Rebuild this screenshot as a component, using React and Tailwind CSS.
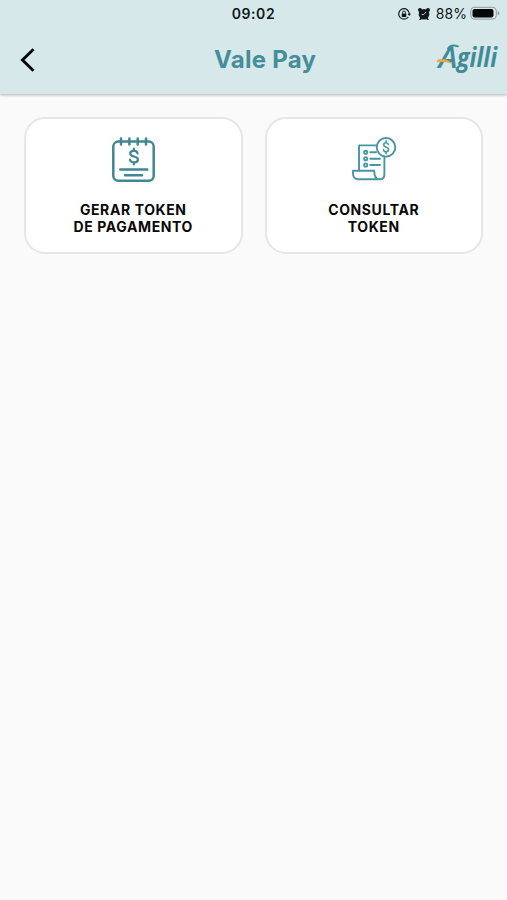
import { useState } from "react";

const ACTIONS = [
  { id: "generate", lines: ["GERAR TOKEN", "DE PAGAMENTO"], Icon: PaymentIcon },
  { id: "consult", lines: ["CONSULTAR", "TOKEN"], Icon: ReceiptIcon },
];

function PaymentIcon() {
  return (
    <svg
      viewBox="-0.7 0 48 48"
      className="h-12 w-12 text-[#3f8792]"
      fill="none"
      stroke="currentColor"
      strokeWidth="2.5"
      strokeLinecap="round"
      strokeLinejoin="round"
    >
      <rect x="3.6" y="5.6" width="40.4" height="39.2" rx="5" />
      <path d="M11.3 2.6v5.8M19.7 2.6v5.8M28 2.6v5.8M36.3 2.6v5.8" />
      <path
        d="M27.900 17.500c-.2-1.800-1.400-2.700-3.200-2.700h-1c-2 0-3.200 1-3.200 2.700 0 4.200 7.700 1.900 7.700 5.900 0 1.800-1.300 2.900-3.400 2.900h-1c-2.100 0-3.300-1-3.500-2.800M24.200 12.700v2M24.200 26.400v2"
        strokeWidth="2.200"
      />
      <path d="M10.600 33.400h27M15.300 39.200h17" />
    </svg>
  );
}

function ReceiptIcon() {
  return (
    <svg
      viewBox="0 0 48 48"
      className="h-12 w-12 text-[#4796a4]"
      fill="none"
      stroke="currentColor"
      strokeWidth="1.9"
      strokeLinecap="round"
      strokeLinejoin="round"
    >
      <path d="M27 9.400H9v25.200" />
      <path d="M34.400 21v17.200c0 3.200-1.800 5.100-4.800 5.100H8.200C4.800 43.300 3 40.800 3 37.600v-2.900h21.200c0 5 1.100 8.600 5.200 8.600" />
      <circle cx="36" cy="11.300" r="9.300" />
      <path d="M38.400 8.600c-.2-1.200-1-1.900-2.300-1.900s-2.400.8-2.400 2.100c0 3.200 4.900 1.700 4.900 4.800 0 1.400-1.100 2.200-2.500 2.200s-2.400-.8-2.600-2.200M36.100 4.900v1.800M36.100 15.900v1.800" strokeWidth="1.600" />
      <circle cx="15.700" cy="16.300" r="1.600" />
      <circle cx="15.700" cy="22.700" r="1.600" />
      <circle cx="15.700" cy="29" r="1.600" />
      <path d="M20.300 16.300h5.700M20.300 22.700h9.700M20.300 29h9.700" />
    </svg>
  );
}

function AgilliLogo() {
  return (
    <svg viewBox="0 0 68 40" className="h-10 w-[68px] overflow-visible" aria-label="Agilli">
      <g fill="#3f8b98" fontFamily="'Open Sans', sans-serif" fontWeight="700" fontStyle="italic">
        <text x="6.500" y="28.300" fontSize="29" fontWeight="600" textLength="19" lengthAdjust="spacingAndGlyphs">
          A
        </text>
        <text x="25" y="27.300" fontSize="26.500" textLength="40" lengthAdjust="spacingAndGlyphs">
          gilli
        </text>
      </g>
      <path d="M16 8.500C18 5.500 21.500 4.800 26 6.300" fill="none" stroke="#3f8b98" strokeWidth="1.900" strokeLinecap="round" />
      <path d="M5.300 20.400c4.500-1.900 9.500-1.200 13.700 2.700-4.800-1.700-8.700-2.200-13.700-1.200z" fill="#eda93f" stroke="#eda93f" />
    </svg>
  );
}

function StatusBar() {
  return (
    <div className="grid h-7 grid-cols-[1fr_auto_1fr] items-center pr-[7px] pb-px">
      <span />
      <time className="pl-[7px] text-[14px] font-semibold leading-5 tracking-[0.55px] text-[#10191b]">09:02</time>
      <div className="flex items-center justify-end text-[#101719]">
        {/* Bloqueo de orientación */}
        <svg viewBox="0 0 14 14" className="mr-1.5 h-3.5 w-3.5" fill="none" stroke="currentColor" strokeWidth="1.2">
          <path d="M11.300 10A5.300 5.300 0 1 1 12.300 7" />
          <path d="M10.500 6.700h3.500l-1.700 2.200z" fill="currentColor" stroke="none" />
          <rect x="4.700" y="6.500" width="4.600" height="3.400" rx=".5" fill="currentColor" stroke="none" />
          <path d="M5.500 6.700V5.600a1.500 1.500 0 0 1 3 0v1.100" strokeWidth="1" />
        </svg>
        {/* Alarma */}
        <svg viewBox="0 0 14 14" className="mr-[5px] h-3.5 w-3.5" fill="currentColor">
          <circle cx="7" cy="7.300" r="5.300" />
          <circle cx="3" cy="3" r="2" />
          <circle cx="11" cy="3" r="2" />
          <path d="M2 13l2-3h6l2 3h-1.500L9 12H5l-1.500 1z" />
          <path d="M7 7.500l2.200-2.700M7 7.500H4.600" fill="none" stroke="#d7e8ea" strokeWidth=".8" />
        </svg>
        <span className="mr-[3px] text-[14px] leading-5 tracking-[0.1px]">88%</span>
        <svg viewBox="0 0 30 15" className="h-[15px] w-[30px]">
          <rect x=".8" y="1.300" width="25.500" height="11.800" rx="3.500" fill="none" stroke="#909c9e" />
          <rect x="2.500" y="3" width="21" height="8.400" rx="2" fill="#050708" />
          <path d="M27.700 5v4.400q1.700-.6 1.700-2.200t-1.700-2.200z" fill="#909c9e" />
        </svg>
      </div>
    </div>
  );
}

export default function App() {
  const [, setSelected] = useState(null);

  return (
    <div className="min-h-screen bg-[#fafafa] font-['Inter',sans-serif]">
      <header className="h-[94px] bg-[#d7e8ea] shadow-[0_1px_3px_rgba(0,0,0,0.3)]">
        <StatusBar />
        <div className="flex h-16 items-center pr-[7px]">
          <button type="button" className="w-[214px] pl-5" aria-label="Voltar">
            <svg viewBox="0 0 16 24" className="h-6 w-4" fill="none" stroke="#050708" strokeWidth="2.900">
              <path d="M13.500 1.300L2.500 12l11 10.700" />
            </svg>
          </button>
          <h1 className="text-[24px] font-bold leading-8 tracking-[0.25px] text-[#458e99]">Vale Pay</h1>
          <div className="ml-auto">
            <AgilliLogo />
          </div>
        </div>
      </header>

      <main className="grid grid-cols-2 gap-[22px] px-6 pt-[23px]">
        {ACTIONS.map(({ id, lines, Icon }) => (
          <button
            key={id}
            type="button"
            onClick={() => setSelected(id)}
            className="flex h-[137px] flex-col items-center rounded-[21px] border-2 border-[#e6e6e6] bg-white pt-[17px]"
          >
            <Icon />
            <span className="mt-[17px] text-[14px] font-bold leading-[17px] tracking-[0.6px] text-[#080808]">
              {lines[0]}
              <br />
              {lines[1]}
            </span>
          </button>
        ))}
      </main>
    </div>
  );
}
